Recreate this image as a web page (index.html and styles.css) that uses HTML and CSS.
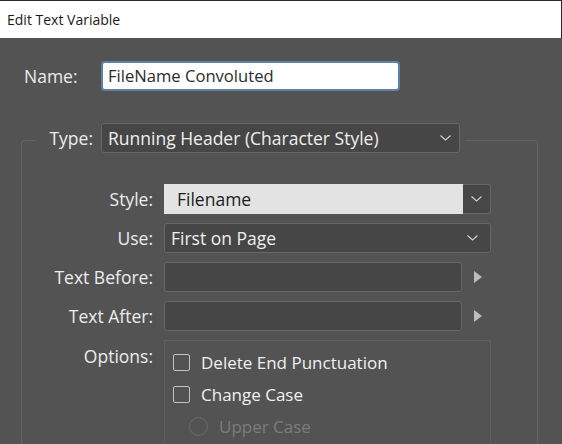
FILE: index.html
```html
<!DOCTYPE html>
<html>
<head>
<meta charset="utf-8">
<link rel="stylesheet" href="styles.css">
</head>
<body>
<div class="titlebar">Edit Text Variable</div>
<div class="name-row">
  <label class="name-label">Name:</label>
  <div class="name-input">FileName Convoluted</div>
</div>
<fieldset class="group">
  <legend class="legend">
    <span class="type-label">Type:</span>
    <div class="dropdown type-dd">
      <span class="dd-text">Running Header (Character Style)</span>
      <svg class="chev" width="11" height="6" viewBox="0 0 11 6"><polyline points="0.5,0.5 5.5,5 10.5,0.5" fill="none" stroke="#d2d2d2" stroke-width="1.1"/></svg>
    </div>
  </legend>
  <div class="form">
    <span class="lbl">Style:</span>
    <div class="style-dd">
      <span class="style-text">Filename</span>
      <span class="style-btn"><svg width="11" height="6" viewBox="0 0 11 6"><polyline points="0.5,0.5 5.5,5 10.5,0.5" fill="none" stroke="#d2d2d2" stroke-width="1.1"/></svg></span>
    </div>

    <span class="lbl">Use:</span>
    <div class="dropdown use-dd">
      <span class="dd-text">First on Page</span>
      <svg class="chev" width="11" height="6" viewBox="0 0 11 6"><polyline points="0.5,0.5 5.5,5 10.5,0.5" fill="none" stroke="#d2d2d2" stroke-width="1.1"/></svg>
    </div>

    <span class="lbl">Text Before:</span>
    <div class="text-cell">
      <div class="textfield"></div>
      <svg class="arrow" width="8" height="12" viewBox="0 0 8 12"><polygon points="0,0 8,6 0,12" fill="#bdbdbd"/></svg>
    </div>

    <span class="lbl">Text After:</span>
    <div class="text-cell">
      <div class="textfield"></div>
      <svg class="arrow" width="8" height="12" viewBox="0 0 8 12"><polygon points="0,0 8,6 0,12" fill="#bdbdbd"/></svg>
    </div>

    <span class="lbl lbl-top">Options:</span>
    <div class="options">
      <div class="opt"><span class="check"></span><span class="opt-text">Delete End Punctuation</span></div>
      <div class="opt"><span class="check"></span><span class="opt-text">Change Case</span></div>
      <div class="opt sub disabled"><span class="radio"></span><span class="opt-text">Upper Case</span></div>
    </div>
  </div>
</fieldset>
</body>
</html>
```
FILE: styles.css
```css
html, body {
  margin: 0;
  padding: 0;
  width: 562px;
  height: 444px;
  overflow: hidden;
}
body {
  background: #535353;
  font-family: "Open Sans", "Noto Sans", sans-serif;
  color: #ececec;
}
.titlebar {
  height: 37px;
  line-height: 37px;
  background: #ffffff;
  border-top: 1px solid #2a2a2a;
  border-right: 1px solid #2a2a2a;
  padding-left: 7px;
  font-size: 14px;
  color: #1a1a1a;
}
.name-row {
  display: flex;
  align-items: center;
  margin-top: 23px;
  padding-left: 24px;
  height: 30px;
}
.name-label {
  width: 77px;
  font-size: 17.5px;
}
.name-input {
  box-sizing: border-box;
  width: 299px;
  height: 30px;
  background: #ffffff;
  border: 2px solid #5d81ab;
  border-radius: 4px;
  padding-left: 5px;
  font-size: 16.6px;
  line-height: 26px;
  color: #2b2b2b;
}
.group {
  margin: 32px 24px 0 21px;
  padding: 0;
  border: 1px solid #636363;
  border-bottom: none;
  border-radius: 4px 4px 0 0;
  min-width: 0;
}
.legend {
  display: flex;
  align-items: flex-start;
  margin-left: 14px;
  padding: 0 5px 4px 10px;
}
.type-label {
  box-sizing: border-box;
  width: 55px;
  padding-right: 8px;
  text-align: right;
  font-size: 17.5px;
  line-height: 30px;
}
.dropdown {
  box-sizing: border-box;
  display: flex;
  align-items: center;
  justify-content: space-between;
  height: 30px;
  background: #464646;
  border: 1px solid #676767;
  border-radius: 3px;
  font-size: 17.5px;
  color: #efefef;
}
.type-dd {
  width: 359px;
  padding: 0 8px 0 6px;
}
.use-dd {
  width: 327px;
  padding: 0 12px 0 6px;
}
.dd-text {
  line-height: 28px;
}
.chev {
  display: block;
}
.form {
  display: grid;
  grid-template-columns: 131px 327px;
  column-gap: 11px;
  row-gap: 9px;
  padding-top: 27px;
  align-items: center;
}
.lbl {
  text-align: right;
  font-size: 17.5px;
  line-height: 30px;
}
.lbl-top {
  align-self: start;
  line-height: 22px;
  margin-top: 5px;
}
.style-dd {
  box-sizing: border-box;
  display: flex;
  height: 30px;
}
.style-text {
  flex: 1;
  background: #e3e3e3;
  color: #1c1c1c;
  font-size: 17.5px;
  line-height: 30px;
  padding-left: 13px;
}
.style-btn {
  box-sizing: border-box;
  width: 28px;
  height: 30px;
  background: #474747;
  border: 1px solid #676767;
  border-left: none;
  border-radius: 0 3px 3px 0;
  display: flex;
  align-items: center;
  justify-content: center;
}
.text-cell {
  display: flex;
  align-items: center;
}
.textfield {
  box-sizing: border-box;
  width: 298px;
  height: 30px;
  background: #464646;
  border: 1px solid #676767;
  border-radius: 3px;
}
.arrow {
  display: block;
  margin-left: 12px;
}
.options {
  box-sizing: border-box;
  height: 104px;
  border: 1px solid #5f5f5f;
  border-bottom: none;
  padding: 13px 0 0 8px;
  display: flex;
  flex-direction: column;
  row-gap: 15px;
}
.opt {
  display: flex;
  align-items: center;
  height: 17px;
  font-size: 17px;
  color: #f0f0f0;
}
.check {
  box-sizing: border-box;
  width: 17px;
  height: 17px;
  border: 1px solid #c2c2c2;
  border-radius: 2px;
  margin-right: 11px;
}
.sub {
  padding-left: 16px;
}
.radio {
  box-sizing: border-box;
  width: 19px;
  height: 19px;
  border: 1px solid #6a6a6a;
  border-radius: 50%;
  margin-right: 11px;
}
.disabled {
  color: #7c7c7c;
}
```
